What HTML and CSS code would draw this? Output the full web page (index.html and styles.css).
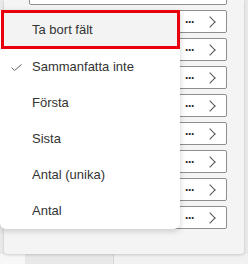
FILE: index.html
```html
<!DOCTYPE html>
<html lang="sv">
<head>
  <meta charset="UTF-8">
  <title>Fältmeny</title>
  <link rel="stylesheet" href="styles.css">
</head>
<body>
  <div class="stage">
    <div class="panel">
      <div class="rows">
        <div class="row"></div>
        <div class="row"><span class="dots">···</span><span class="chev"></span></div>
        <div class="row"><span class="dots">···</span><span class="chev"></span></div>
        <div class="row"><span class="dots">···</span><span class="chev"></span></div>
        <div class="row"><span class="dots">···</span><span class="chev"></span></div>
        <div class="row"><span class="dots">···</span><span class="chev"></span></div>
        <div class="row"><span class="dots">···</span><span class="chev"></span></div>
        <div class="row"><span class="dots">···</span><span class="chev"></span></div>
        <div class="row"><span class="dots">···</span><span class="chev"></span></div>
      </div>
    </div>
    <div class="footer">
      <div class="col-a"></div>
      <div class="col-b"></div>
      <div class="col-c"></div>
    </div>

    <ul class="menu">
      <li class="item active">Ta bort fält</li>
      <li class="item">
        <svg class="check" width="11" height="7" viewBox="0 0 11 7">
          <path d="M0.5 3.5 L3.5 6.5 L10.5 0.5" fill="none" stroke="#666" stroke-width="1"/>
        </svg>
        Sammanfatta inte
      </li>
      <li class="item">Första</li>
      <li class="item">Sista</li>
      <li class="item">Antal (unika)</li>
      <li class="item">Antal</li>
    </ul>
  </div>
</body>
</html>
```

FILE: styles.css
```css
body {
  margin: 0;
  background-color: #f7f7f7;
  font-family: "Liberation Sans", Arial, sans-serif;
  color: #333;
}

.stage {
  position: relative;
  width: 248px;
  height: 264px;
  overflow: hidden;
  background-color: #e9e9e9;
}

.panel {
  margin-left: 4px;
  width: 240px;
  height: 254px;
  background-color: #f4f4f4;
  border-radius: 0 0 3px 3px;
  box-shadow: 0 1px 3px rgba(0,0,0,0.18);
  overflow: hidden;
  position: relative;
  z-index: 1;
}

.rows {
  display: flex;
  flex-direction: column;
  gap: 5px;
  margin-top: -18px;
  padding-left: 25px;
}

.row {
  width: 187px;
  height: 21px;
  background-color: #fff;
  border: 1px solid #8f8f8f;
  border-radius: 2px;
  display: flex;
  align-items: center;
  justify-content: flex-end;
  gap: 12px;
  padding-right: 9px;
  box-sizing: content-box;
}

.dots {
  font-weight: bold;
  font-size: 12px;
  letter-spacing: -1px;
  color: #222;
  line-height: 1;
}

.chev {
  width: 7px;
  height: 7px;
  border-right: 1px solid #555;
  border-top: 1px solid #555;
  transform: rotate(45deg);
  margin-right: 3px;
}

.footer {
  display: flex;
  height: 10px;
}

.col-a {
  width: 25px;
  background-color: #f7f7f7;
}

.col-b {
  width: 88px;
  background-color: #e8e8e8;
  border-right: 1px solid #d6d6d6;
}

.col-c {
  flex: 1;
  background-color: #f1f1f1;
}

.menu {
  position: absolute;
  left: 0;
  top: 10px;
  width: 180px;
  margin: 0;
  padding: 0;
  list-style: none;
  background-color: #fff;
  border-radius: 0 0 6px 6px;
  box-shadow: 0 2px 6px rgba(0,0,0,0.18);
  z-index: 2;
}

.item {
  position: relative;
  height: 36px;
  line-height: 36px;
  padding-left: 32px;
  font-size: 13px;
  color: #333;
}

.item.active {
  height: 33px;
  line-height: 33px;
  margin-left: 1px;
  padding-left: 28px;
  background-color: #f3f3f3;
  border: 3px solid #e8000d;
}

.check {
  position: absolute;
  left: 11px;
  top: 15px;
}
```
